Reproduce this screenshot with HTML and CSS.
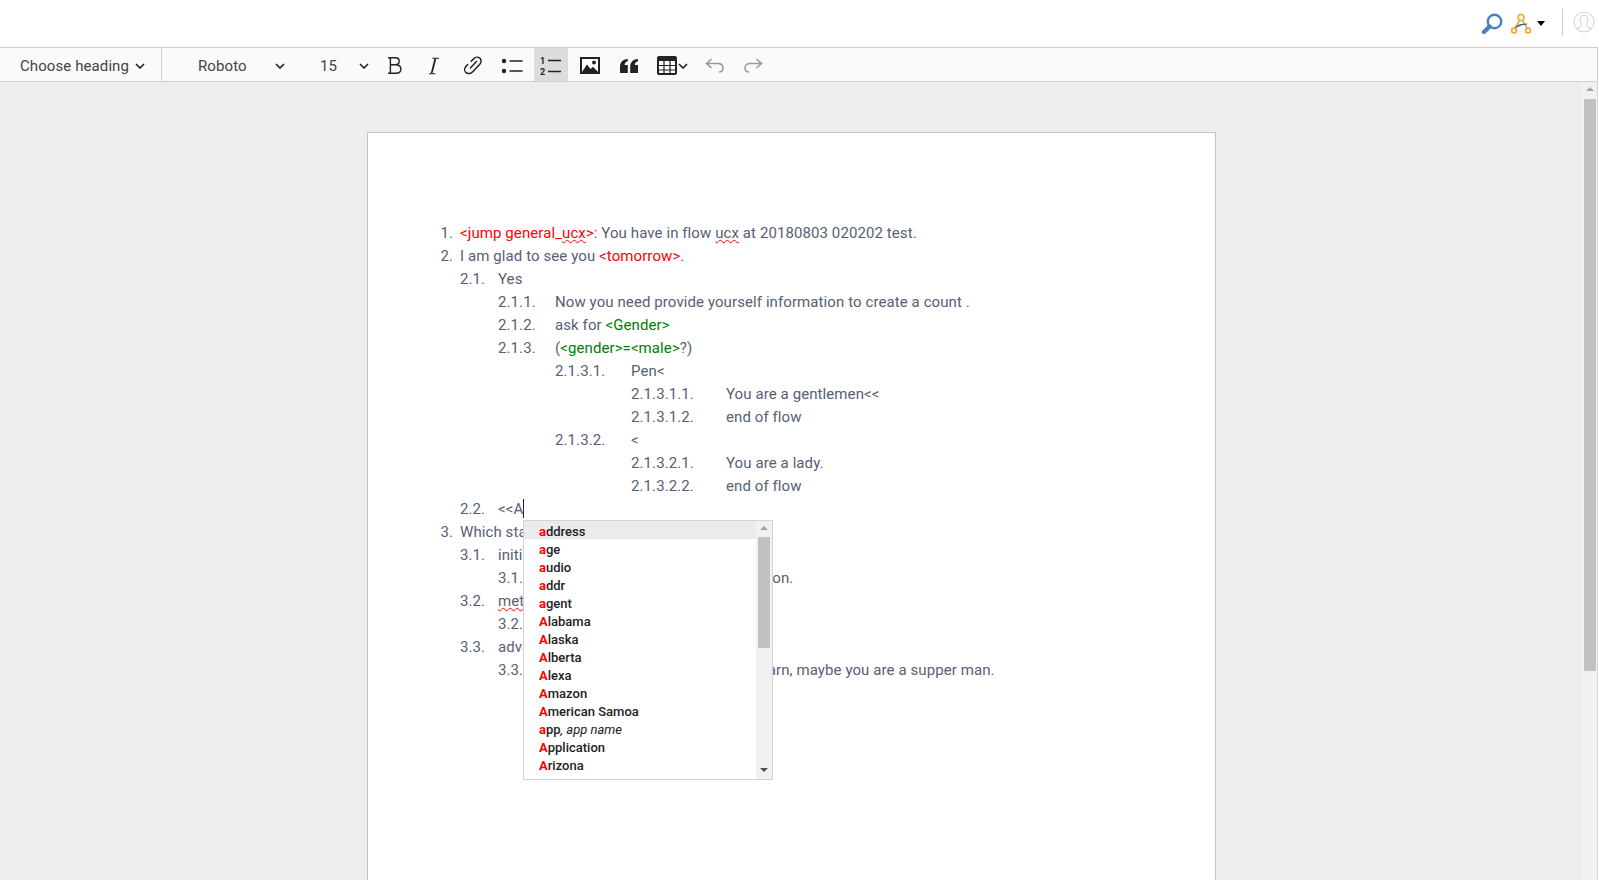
FILE: index.html
```html
<!DOCTYPE html>
<html lang="en">
<head>
    <meta charset="UTF-8">
    <meta name="viewport" content="width=device-width, initial-scale=1.0">
    <title>Flow editor</title>
    <link rel="stylesheet" href="styles.css">
</head>
<body>
    <header class="topbar">
        <svg class="top-icon" width="22" height="22" viewBox="0 0 22 22">
            <circle cx="13.5" cy="8.5" r="6.7" fill="none" stroke="#4a80b8" stroke-width="2.4"/>
            <path d="M8.5 13.5L3 19" stroke="#4a80b8" stroke-width="4.4" stroke-linecap="round"/>
        </svg>
        <svg class="flow-icon" width="22" height="22" viewBox="0 0 22 22">
            <g fill="none" stroke="#f5a623" stroke-width="1.6">
                <circle cx="11" cy="4.5" r="3"/>
                <circle cx="4" cy="17.5" r="2.4"/>
                <circle cx="18" cy="17.5" r="2.4"/>
                <path d="M9.5 7.5L5 15.2M12.5 7.5L17 15.2"/>
            </g>
            <path d="M4.5 14.5L9.5 11.2L17.5 10.4L17 11.4L11 12.4L7 14.6Z" fill="#1f66ad"/>
        </svg>
        <span class="caret"></span>
        <span class="top-divider"></span>
        <svg class="avatar" width="22" height="22" viewBox="0 0 22 22">
            <g fill="none" stroke="#cfcfcf" stroke-width="1">
                <circle cx="11" cy="11" r="10"/>
                <path d="M4.5 18.2C5 15.8 8.2 15.6 9 14.4C9.2 13.6 7.2 11.6 7.2 8.4C7.2 5.8 8.8 4.4 11 4.4C13.2 4.4 14.8 5.8 14.8 8.4C14.8 11.6 12.8 13.6 13 14.4C13.8 15.6 17 15.8 17.5 18.2"/>
            </g>
        </svg>
    </header>

    <div class="toolbar">
        <div class="select select-heading">
            <span>Choose heading</span>
            <svg class="chevron" width="10" height="6" viewBox="0 0 10 6"><path d="M1 1l4 4 4-4"/></svg>
        </div>
        <div class="select select-font">
            <span>Roboto</span>
            <svg class="chevron" width="10" height="6" viewBox="0 0 10 6"><path d="M1 1l4 4 4-4"/></svg>
        </div>
        <div class="select select-size">
            <span>15</span>
            <svg class="chevron" width="10" height="6" viewBox="0 0 10 6"><path d="M1 1l4 4 4-4"/></svg>
        </div>

        <button class="tool" title="Bold">
            <svg width="16" height="19" viewBox="0 0 16 19" fill="none" stroke="#222" stroke-width="1.4">
                <path d="M1 1.7H8.4C11 1.7 12.2 3 12.2 5C12.2 7.2 10.6 8.7 8.4 8.7H3.4M8.4 8.7C11.8 8.7 13.9 10.2 13.9 13C13.9 15.8 11.8 17.3 8.8 17.3H1M3.4 1.7V17.3"/>
            </svg>
        </button>
        <button class="tool" title="Italic">
            <svg width="12" height="18" viewBox="0 0 12 18" fill="none" stroke="#222">
                <path d="M7.4 1.5L3.6 16.5" stroke-width="1.8"/>
                <path d="M4.4 1.2H11M1 16.8H7.4" stroke-width="1.1"/>
            </svg>
        </button>
        <button class="tool" title="Link">
            <svg width="20" height="19" viewBox="0 0 20 19" fill="none" stroke="#222" stroke-width="1.5" stroke-linecap="round">
                <path d="M8.2 5.2L10.8 2.6C12.6 .8 15.4 .8 17 2.4C18.6 4 18.4 6.6 16.8 8.2L10 15.4C8.2 17.4 5 18.4 3 16.6C1 14.8 1.4 12 3 10.2L4.6 8.6"/>
                <path d="M13.4 5.6L7.4 12"/>
            </svg>
        </button>
        <button class="tool" title="Bulleted list">
            <svg width="22" height="16" viewBox="0 0 22 16">
                <circle cx="3" cy="3" r="2.2" fill="#222"/>
                <circle cx="3" cy="13" r="2.2" fill="#222"/>
                <path d="M8.5 3H21.5M8.5 13H21.5" stroke="#222" stroke-width="1.7"/>
            </svg>
        </button>
        <button class="tool tool-active" title="Numbered list">
            <svg width="22" height="20" viewBox="0 0 22 20">
                <text x="0" y="8" class="list-digit">1</text>
                <text x="0" y="19" class="list-digit">2</text>
                <path d="M8 4.5H21M8 15.5H21" stroke="#222" stroke-width="1.7"/>
            </svg>
        </button>
        <button class="tool" title="Image">
            <svg width="20" height="17" viewBox="0 0 20 17">
                <rect x="1" y="1" width="18" height="15" fill="#fff" stroke="#222" stroke-width="2"/>
                <circle cx="14" cy="5.5" r="2" fill="#222"/>
                <path d="M2 15L7 7.5L10.5 12L13 9.8L18 15Z" fill="#222"/>
            </svg>
        </button>
        <button class="tool" title="Quote">
            <svg width="18" height="14" viewBox="0 0 18 14" fill="#222">
                <path d="M7.8 6H4.6C4.7 3.8 6 2.6 7.8 2.3V0C3.4 .3 0 2.6 0 8V14H7.8Z"/>
                <path d="M18 6H14.8C14.9 3.8 16.2 2.6 18 2.3V0C13.6 .3 10.2 2.6 10.2 8V14H18Z"/>
            </svg>
        </button>
        <button class="tool tool-table" title="Table">
            <svg width="20" height="19" viewBox="0 0 20 19">
                <rect x="1" y="1" width="18" height="17" rx="1" fill="#fff" stroke="#222" stroke-width="2"/>
                <rect x="1" y="1" width="18" height="4" fill="#222"/>
                <path d="M7 5V18M13 5V18M1 9.5H19M1 14H19" stroke="#222" stroke-width="1.2"/>
            </svg>
            <svg class="chevron" width="10" height="6" viewBox="0 0 10 6"><path d="M1 1l4 4 4-4"/></svg>
        </button>
        <button class="tool" title="Undo">
            <svg width="19" height="15" viewBox="0 0 19 15" fill="none" stroke="#999" stroke-width="1.6">
                <path d="M6.5 1L1.5 5.5L6.5 10M1.5 5.5H13C16 5.5 18 7.4 18 10C18 12.4 16.4 14 14 14"/>
            </svg>
        </button>
        <button class="tool" title="Redo">
            <svg width="19" height="15" viewBox="0 0 19 15" fill="none" stroke="#999" stroke-width="1.6">
                <path d="M12.5 1L17.5 5.5L12.5 10M17.5 5.5H6C3 5.5 1 7.4 1 10C1 12.4 2.6 14 5 14"/>
            </svg>
        </button>
    </div>

    <div class="workspace">
        <main class="canvas">
            <article class="paper">
                <ol class="lv1">
                    <li><span class="num">1.</span><span class="red">&lt;jump general_<span class="spell">ucx</span>&gt;</span>: You have in flow <span class="spell">ucx</span> at 20180803 020202 test.</li>
                    <li><span class="num">2.</span>I am glad to see you <span class="red">&lt;tomorrow&gt;</span>.
                        <ol class="lv2">
                            <li><span class="num">2.1.</span>Yes
                                <ol class="lv3">
                                    <li><span class="num">2.1.1.</span>Now you need provide yourself information to create a count .</li>
                                    <li><span class="num">2.1.2.</span>ask for <span class="green">&lt;Gender&gt;</span></li>
                                    <li><span class="num">2.1.3.</span>(<span class="green">&lt;gender&gt;=&lt;male&gt;</span>?)
                                        <ol class="lv4">
                                            <li><span class="num">2.1.3.1.</span>Pen&lt;
                                                <ol class="lv5">
                                                    <li><span class="num">2.1.3.1.1.</span>You are a gentlemen&lt;&lt;</li>
                                                    <li><span class="num">2.1.3.1.2.</span>end of flow</li>
                                                </ol>
                                            </li>
                                            <li><span class="num">2.1.3.2.</span>&lt;
                                                <ol class="lv5">
                                                    <li><span class="num">2.1.3.2.1.</span>You are a lady.</li>
                                                    <li><span class="num">2.1.3.2.2.</span>end of flow</li>
                                                </ol>
                                            </li>
                                        </ol>
                                    </li>
                                </ol>
                            </li>
                            <li><span class="num">2.2.</span>&lt;&lt;A<span class="cursor"></span></li>
                        </ol>
                    </li>
                    <li><span class="num">3.</span>Which state are you in now?
                        <ol class="lv2">
                            <li><span class="num">3.1.</span>initial
                                <ol class="lv3">
                                    <li><span class="num">3.1.1.</span>You should begin with a fun lesson.</li>
                                </ol>
                            </li>
                            <li><span class="num">3.2.</span><span class="spell">metium</span>
                                <ol class="lv3">
                                    <li><span class="num">3.2.1.</span>Keep going.</li>
                                </ol>
                            </li>
                            <li><span class="num">3.3.</span>advanced
                                <ol class="lv3">
                                    <li><span class="num">3.3.1.</span>If you still wish to continue to learn, maybe you are a supper man.</li>
                                </ol>
                            </li>
                        </ol>
                    </li>
                </ol>

                <div class="suggest">
                    <ul class="suggest-list">
                        <li class="selected"><b>a</b>ddress</li>
                        <li><b>a</b>ge</li>
                        <li><b>a</b>udio</li>
                        <li><b>a</b>ddr</li>
                        <li><b>a</b>gent</li>
                        <li><b>A</b>labama</li>
                        <li><b>A</b>laska</li>
                        <li><b>A</b>lberta</li>
                        <li><b>A</b>lexa</li>
                        <li><b>A</b>mazon</li>
                        <li><b>A</b>merican Samoa</li>
                        <li><b>a</b>pp<em>, app name</em></li>
                        <li><b>A</b>pplication</li>
                        <li><b>A</b>rizona</li>
                        <li><b>A</b>sia</li>
                    </ul>
                    <div class="scrollbar scrollbar-small">
                        <span class="arrow-up"></span>
                        <span class="thumb"></span>
                        <span class="arrow-down"></span>
                    </div>
                </div>
            </article>
        </main>
        <div class="scrollbar scrollbar-page">
            <span class="arrow-up"></span>
            <span class="thumb"></span>
        </div>
    </div>
</body>
</html>
```

FILE: styles.css
```css
* {
    box-sizing: border-box;
}

html, body {
    height: 100%;
}

body {
    margin: 0;
    display: flex;
    flex-direction: column;
    overflow: hidden;
    background: #fff;
    font-family: Roboto, sans-serif;
    font-size: 15px;
    letter-spacing: .09px;
    color: #566074;
}

/* top bar */
.topbar {
    height: 47px;
    flex: none;
    display: flex;
    align-items: center;
    padding-right: 4px;
    justify-content: flex-end;
}

.top-icon {
    margin-right: 7px;
}

.flow-icon {
    margin-right: 5px;
}

.caret {
    width: 0;
    height: 0;
    border-left: 4px solid transparent;
    border-right: 4px solid transparent;
    border-top: 5px solid #000;
    margin-right: 17px;
}

.top-divider {
    width: 1px;
    height: 27px;
    background: #ccc;
    margin-right: 10px;
    margin-top: -2px;
}

.avatar {
    margin-top: -3px;
}

/* toolbar */
.toolbar {
    height: 35px;
    flex: none;
    display: flex;
    align-items: stretch;
    background: #fafafa;
    border-top: 1px solid #cfcfcf;
    border-bottom: 1px solid #cfcfcf;
    border-right: 1px solid #cfcfcf;
    margin-right: 1px;
}

.select {
    display: flex;
    align-items: center;
    color: #444;
    font-size: 15px;
}

.select span {
    flex: 1;
}

.select-heading {
    width: 162px;
    padding: 2px 16px 0 20px;
    border-right: 1px solid #cfcfcf;
}

.select-font {
    width: 138px;
    padding: 2px 15px 0 36px;
}

.select-size {
    width: 78px;
    padding: 2px 9px 0 20px;
}

.chevron {
    flex: none;
    fill: none;
    stroke: #222;
    stroke-width: 1.6;
}

.tool {
    width: 34px;
    margin-right: 5px;
    padding: 2px 0 0;
    border: none;
    background: none;
    display: flex;
    align-items: center;
    justify-content: center;
}

.tool-active {
    background: #dcdcdc;
}

.tool-table {
    width: 41px;
    padding-left: 6px;
    gap: 1px;
    justify-content: flex-start;
}

.list-digit {
    font-family: Roboto, sans-serif;
    font-size: 9px;
    font-weight: 700;
    fill: #222;
}

/* editing area */
.workspace {
    flex: 1;
    min-height: 0;
    display: flex;
    background: #fff;
}

.canvas {
    width: 1582px;
    flex: none;
    background: #ededed;
    padding-top: 50px;
    overflow: hidden;
}

.paper {
    position: relative;
    width: 849px;
    height: 900px;
    margin-left: 367px;
    padding-top: 89px;
    background: #fff;
    border: 1px solid #c4c4c4;
}

ol {
    list-style: none;
    margin: 0;
}

.paper > ol {
    padding-left: 92px;
}

li {
    line-height: 23px;
}

.num {
    display: inline-block;
}

.lv1 > li > .num {
    width: 20px;
    margin-left: -20px;
    padding-right: 7px;
    text-align: right;
}

.lv2 {
    padding-left: 38px;
}

.lv2 > li > .num {
    width: 38px;
    margin-left: -38px;
}

.lv3 {
    padding-left: 57px;
}

.lv3 > li > .num {
    width: 57px;
    margin-left: -57px;
}

.lv4 {
    padding-left: 76px;
}

.lv4 > li > .num {
    width: 76px;
    margin-left: -76px;
}

.lv5 {
    padding-left: 95px;
}

.lv5 > li > .num {
    width: 95px;
    margin-left: -95px;
}

.red {
    color: #f00;
}

.green {
    color: #008000;
}

.spell {
    text-decoration: underline wavy #f00 1px;
    text-underline-offset: 1px;
}

.cursor {
    display: inline-block;
    width: 1px;
    height: 19px;
    background: #222;
    vertical-align: -4px;
}

/* suggestion popup over the text */
.suggest {
    position: absolute;
    left: 155px;
    top: 387px;
    width: 250px;
    height: 260px;
    display: flex;
    background: #fff;
    border: 1px solid #d4d4d4;
    overflow: hidden;
    letter-spacing: 0;
}

.suggest-list {
    flex: 1;
    margin: 0;
    padding: 0;
    list-style: none;
    overflow: hidden;
}

.suggest-list li {
    height: 18px;
    padding: 2px 0 0 15px;
    line-height: 18px;
    font-size: 13px;
    font-weight: 500;
    color: #222;
    white-space: nowrap;
}

.suggest-list li.selected {
    background: #ebebeb;
}

.suggest-list b {
    color: #f00;
    font-weight: 700;
}

.suggest-list em {
    font-weight: 400;
}

/* scrollbars */
.scrollbar {
    position: relative;
    flex: none;
    background: #f1f1f1;
}

.scrollbar-small {
    width: 16px;
}

.scrollbar-small .thumb {
    position: absolute;
    left: 2px;
    right: 2px;
    top: 16px;
    height: 111px;
    background: #c1c1c1;
}

.scrollbar-page {
    width: 16px;
    border-right: 1px solid #d8d8d8;
}

.scrollbar-page .thumb {
    position: absolute;
    left: 2px;
    width: 12px;
    top: 17px;
    height: 572px;
    background: #c1c1c1;
}

.arrow-up, .arrow-down {
    position: absolute;
    left: 50%;
    margin-left: -4px;
    width: 0;
    height: 0;
    border-left: 4px solid transparent;
    border-right: 4px solid transparent;
}

.arrow-up {
    top: 5px;
    border-bottom: 4px solid #a3a3a3;
}

.arrow-down {
    bottom: 7px;
    border-top: 4px solid #505050;
}
```
